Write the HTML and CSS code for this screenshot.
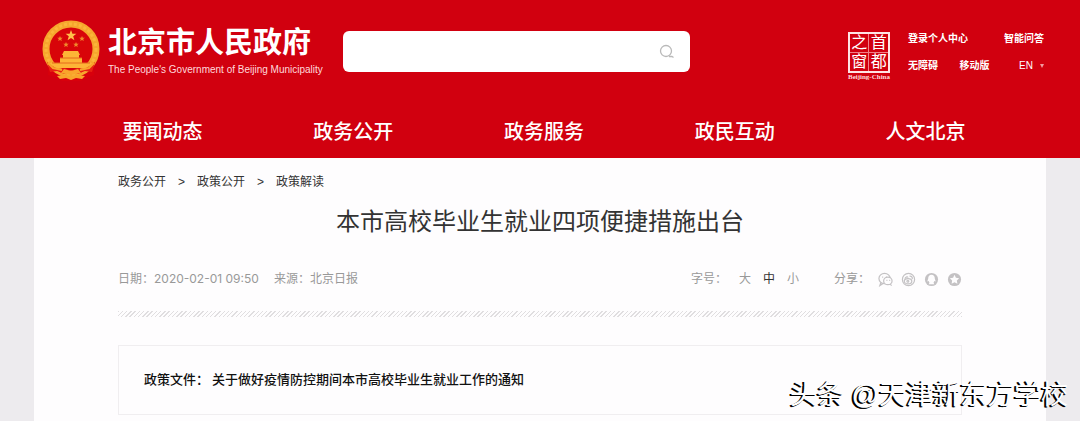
FILE: index.html
```
<!DOCTYPE html>
<html lang="zh-CN">
<head>
    <meta charset="UTF-8">
    <meta name="viewport" content="width=device-width, initial-scale=1.0">
    <title>本市高校毕业生就业四项便捷措施出台</title>
    <link rel="stylesheet" href="styles.css">
</head>
<body>
    <header class="header">
        <div class="top">
            <a class="logo" href="#">
                <svg class="emblem" viewBox="0 0 58 62" aria-hidden="true">
                    <path d="M7 41 L6 55 L16 58 L20 61 H39 L44 58 L52 55 L51 41Z" fill="#d8000c"/>
                    <circle cx="29" cy="29" r="25" fill="#d80509" stroke="#f6a62d" stroke-width="7"/>
                    <circle cx="29" cy="29" r="25" fill="none" stroke="#fbb53a" stroke-width="3" stroke-dasharray="3 2"/>
                    <path d="M29 10l1.4 3.8h4l-3.2 2.5 1.2 4-3.4-2.4-3.4 2.4 1.2-4-3.2-2.5h4z" fill="#ffc04a"/>
                    <g fill="#f08a2c">
                        <path d="M18 16l.8 1.8h2l-1.6 1.3.6 2-1.8-1.1-1.8 1.1.6-2-1.6-1.3h2z"/>
                        <path d="M40 16l.8 1.8h2l-1.6 1.3.6 2-1.8-1.1-1.8 1.1.6-2-1.6-1.3h2z"/>
                        <path d="M24 22l.8 1.8h2l-1.6 1.3.6 2-1.8-1.1-1.8 1.1.6-2-1.6-1.3h2z"/>
                        <path d="M34 22l.8 1.8h2l-1.6 1.3.6 2-1.8-1.1-1.8 1.1.6-2-1.6-1.3h2z"/>
                    </g>
                    <path d="M22 31h14l2 4h-1v3h3v5h9l-4 5H13l-4-5h9v-5h3v-3h-1z" fill="#fdb536"/>
                    <path d="M18 38h22M10 43h38" stroke="#e56a1c" stroke-width="1"/>
                    <path d="M5 42l5 4 6 3 7-1 6 3 6-3 7 1 6-3 5-4-3 10-7-1-7 3-7-2-7 2-7-3-7 1z" fill="#e82012"/>
                    <path d="M6 43l5 5 9 2M52 43l-5 5-9 2" fill="none" stroke="#f9a52b" stroke-width="2"/>
                    <path d="M22 49l7 2 7-2 3 4-10 2-10-2zM15 56l8-1 6 2 6-2 8 1-3 3-6-1-5 2-5-2-6 1z" fill="#f9a52b"/>
                </svg>
                <span class="logo-text">
                    <strong class="logo-name">北京市人民政府</strong>
                    <span class="logo-en">The People's Government of Beijing Municipality</span>
                </span>
            </a>
            <form class="search">
                <input class="search-input" type="text" aria-label="搜索">
                <button class="search-btn" type="button" aria-label="搜索">
                    <svg viewBox="0 0 16 16" width="16" height="16" fill="none" stroke="#b9b9b9" stroke-width="1.3">
                        <circle cx="7" cy="7" r="5.5"/>
                        <path d="M10 12.500h3l1.500 1"/>
                    </svg>
                </button>
            </form>
            <a class="capital" href="#">
                <span class="seal"><span>之</span><span>首</span><span>窗</span><span>都</span></span>
                <span class="seal-en">Beijing-China</span>
            </a>
            <div class="links">
                <div class="links-row">
                    <a href="#">登录个人中心</a>
                    <a href="#">智能问答</a>
                </div>
                <div class="links-row">
                    <a href="#">无障碍</a>
                    <a href="#">移动版</a>
                    <a class="lang" href="#">EN <span class="arrow"></span></a>
                </div>
            </div>
        </div>
        <nav class="nav">
            <a href="#">要闻动态</a>
            <a href="#">政务公开</a>
            <a href="#">政务服务</a>
            <a href="#">政民互动</a>
            <a href="#">人文北京</a>
        </nav>
    </header>

    <main class="page">
        <div class="crumbs">
            <a href="#">政务公开</a>
            <span>&gt;</span>
            <a href="#">政策公开</a>
            <span>&gt;</span>
            <a href="#">政策解读</a>
        </div>
        <h1 class="title">本市高校毕业生就业四项便捷措施出台</h1>
        <div class="meta">
            <span>日期：2020-02-01 09:50</span>
            <span>来源：北京日报</span>
            <div class="sizes">
                <span>字号：</span>
                <button type="button">大</button>
                <button class="active" type="button">中</button>
                <button type="button">小</button>
            </div>
            <div class="share">
                <span>分享：</span>
                <a href="#" aria-label="微信">
                    <svg viewBox="0 0 16 16">
                        <ellipse cx="7" cy="7" rx="6" ry="5.5"/>
                        <path d="M3 11.500l-1 3 3-2"/>
                        <ellipse class="fill" cx="10.500" cy="9.500" rx="4.500" ry="4"/>
                        <path d="M13 13l1.500 1.500M4.500 5.500h1M8.500 5.500h1M9 9h1M12 9h1"/>
                    </svg>
                </a>
                <a href="#" aria-label="微博">
                    <svg viewBox="0 0 16 16">
                        <circle cx="8" cy="8" r="6.500"/>
                        <ellipse cx="7.500" cy="9.800" rx="4" ry="2.800"/>
                        <circle cx="7.300" cy="9.800" r="1"/>
                        <path d="M4 7c1.500-2 3-2.500 3.500-1M9 4.500c2-.5 3.500 1 3 3"/>
                    </svg>
                </a>
                <a href="#" aria-label="QQ">
                    <svg viewBox="0 0 16 16">
                        <circle class="disc" cx="8" cy="8" r="7"/>
                        <path class="shape" d="M8 3C5.500 3 4.500 5 4.500 7L3.500 10l1.500-.3.8 1.800L5 13h6l-.8-1.500.8-1.800 1.500.3-1-3c0-2-1-4-3.500-4z"/>
                    </svg>
                </a>
                <a href="#" aria-label="QQ空间">
                    <svg viewBox="0 0 16 16">
                        <circle class="disc" cx="8" cy="8" r="7"/>
                        <path class="shape" d="M8 3l1.500 3.200 3.500.5-2.500 2.400.6 3.500L8 11l-3.100 1.600.6-3.500L3 6.700l3.500-.5z"/>
                    </svg>
                </a>
            </div>
        </div>
        <div class="stripe"></div>
        <div class="policy">
            <span>政策文件：</span>
            <a href="#">关于做好疫情防控期间本市高校毕业生就业工作的通知</a>
        </div>
    </main>

    <div class="watermark">头条 @天津新东方学校</div>
</body>
</html>
```
FILE: styles.css
```
* {
    box-sizing: border-box;
}
body {
    margin: 0;
    min-height: 100vh;
    position: relative;
    display: flex;
    flex-direction: column;
    background: #edebee;
    color: #333;
    font-family: "Liberation Sans", "Noto Sans CJK SC", sans-serif;
    font-size: 12px;
}
a {
    color: inherit;
    text-decoration: none;
}
button {
    border: none;
    padding: 0;
    background: none;
    color: inherit;
    font: inherit;
    cursor: pointer;
}

/* header */
.header {
    background: #d1000f;
    color: #fff;
}
.top {
    display: flex;
    align-items: flex-start;
    height: 106px;
    padding: 20px 36px 0 42px;
}
.logo {
    display: flex;
    gap: 8px;
}
.emblem {
    width: 58px;
    height: 62px;
}
.logo-text {
    display: flex;
    flex-direction: column;
    padding-top: 6px;
    white-space: nowrap;
}
.logo-name {
    font-size: 29px;
    line-height: 34px;
}
.logo-en {
    font-family: "Liberation Sans", sans-serif;
    font-size: 10px;
    line-height: 20px;
    color: #ffd9dc;
}
.search {
    display: flex;
    flex: 0 1 347px;
    height: 41px;
    margin: 11px 0 0 20px;
    background: #fff;
    border-radius: 6px;
}
.search-input {
    flex: 1;
    min-width: 0;
    padding: 0 12px;
    border: none;
    outline: none;
    background: none;
    font-size: 14px;
}
.search-btn {
    display: flex;
    align-items: center;
    padding: 0 15px;
}
.capital {
    display: flex;
    flex-direction: column;
    align-items: center;
    margin: 12px 18px 0 auto;
}
.seal {
    display: grid;
    grid-template-columns: 1fr 1fr;
    gap: 1px;
    width: 42px;
    border: 2px solid #ffe3e4;
    background: #f08088;
}
.seal span {
    background: #d1000f;
    font-size: 16px;
    line-height: 18px;
    text-align: center;
}
.seal-en {
    font-family: "Liberation Serif", serif;
    font-size: 7px;
    font-weight: bold;
    line-height: 8px;
    color: #ffd9dc;
}
.links {
    width: 136px;
    padding-top: 11px;
    font-size: 10px;
    font-weight: bold;
}
.links-row {
    display: flex;
    justify-content: space-between;
    height: 27px;
    line-height: 16px;
}
.lang {
    display: flex;
    align-items: center;
    gap: 7px;
    height: 16px;
    margin-left: 8px;
    font-weight: normal;
}
.arrow {
    border: 2px solid transparent;
    border-top: 4px solid #f29aa0;
    border-bottom: none;
}
.nav {
    display: grid;
    grid-template-columns: repeat(5, 1fr);
    height: 52px;
    padding: 0 59px 0 67px;
    font-size: 20px;
    font-weight: 500;
    line-height: 52px;
    text-align: center;
}

/* article */
.page {
    flex: 1;
    margin: 0 34px;
    padding: 14px 84px 6px;
    background: #fefdfe;
}
.crumbs {
    display: flex;
    gap: 12px;
    line-height: 20px;
}
.title {
    margin: 12px 0 30px;
    font-size: 24px;
    font-weight: normal;
    line-height: 36px;
    text-align: center;
}
.meta {
    display: flex;
    align-items: center;
    gap: 15px;
    line-height: 18px;
    color: #999;
    font-family: Inter, "Noto Sans CJK SC", sans-serif;
}
.sizes {
    display: flex;
    gap: 12px;
    margin-left: auto;
}
.sizes .active {
    color: #333;
}
.share {
    display: flex;
    align-items: center;
    gap: 8px;
    margin-left: 20px;
}
.share svg {
    display: block;
    width: 15px;
    height: 15px;
    fill: none;
    stroke: #c4c2c4;
    stroke-width: 1.3;
}
.share .fill {
    fill: #fefdfe;
}
.share .disc {
    fill: #c4c2c4;
    stroke: none;
}
.share .shape {
    fill: #fefdfe;
    stroke: none;
}
.stripe {
    height: 6px;
    margin: 23px 0 28px;
    background: repeating-linear-gradient(135deg, #e0dee0 0, #e0dee0 1px, #fefdfe 1px, #fefdfe 3px);
}
.policy {
    display: flex;
    gap: 3px;
    padding: 24px 25px;
    border: 1px solid #f0eef0;
    color: #111;
    font-size: 13px;
    font-weight: 500;
    line-height: 20px;
}

.watermark {
    position: absolute;
    right: 12px;
    bottom: 8px;
    color: #fff;
    font-size: 27px;
    line-height: 36px;
    text-shadow: -1px 1px 0 #000, -2px 1px 0 #000;
}
```
